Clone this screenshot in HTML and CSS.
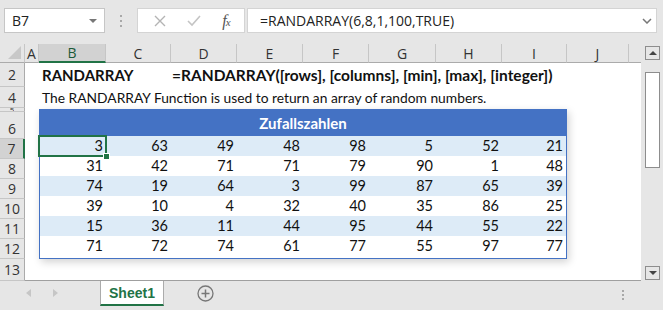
FILE: index.html
```html
<!DOCTYPE html>
<html lang="en">
<head>
    <meta charset="UTF-8">
    <title>RANDARRAY</title>
    <link rel="stylesheet" href="styles.css">
</head>
<body>
    <div class="window">
        <!-- formula bar -->
        <div class="formula-bar">
            <div class="name-box">
                <span>B7</span>
                <span class="caret"></span>
            </div>
            <div class="grip"><i></i><i></i><i></i></div>
            <div class="fx-buttons">
                <svg width="12" height="12" viewBox="0 0 12 12"><path d="M1 1 L11 11 M11 1 L1 11" stroke="#b4b4b4" stroke-width="1.4" fill="none"/></svg>
                <svg width="14" height="12" viewBox="0 0 14 12"><path d="M1 6 L5 10 L13 1" stroke="#c4c4c4" stroke-width="1.6" fill="none"/></svg>
                <span class="fx">f<small>x</small></span>
            </div>
            <div class="formula-input">
                <span>=RANDARRAY(6,8,1,100,TRUE)</span>
                <svg width="10" height="6" viewBox="0 0 10 6"><path d="M1 1 L5 5 L9 1" stroke="#777" stroke-width="1.5" fill="none"/></svg>
            </div>
        </div>

        <div class="workspace">
            <div class="sheet">
                <!-- column headers -->
                <div class="corner"></div>
                <div class="col-head">A</div>
                <div class="col-head selected">B</div>
                <div class="col-head">C</div>
                <div class="col-head">D</div>
                <div class="col-head">E</div>
                <div class="col-head">F</div>
                <div class="col-head">G</div>
                <div class="col-head">H</div>
                <div class="col-head">I</div>
                <div class="col-head">J</div>
                <div class="col-head blank"></div>

                <!-- row headers -->
                <div class="row-head r2">2</div>
                <div class="row-head r4">4</div>
                <div class="row-head r5"><span>5</span></div>
                <div class="row-head r6">6</div>
                <div class="row-head r7 selected">7</div>
                <div class="row-head r8">8</div>
                <div class="row-head r9">9</div>
                <div class="row-head r10">10</div>
                <div class="row-head r11">11</div>
                <div class="row-head r12">12</div>
                <div class="row-head r13">13</div>

                <!-- cells -->
                <div class="title">RANDARRAY</div>
                <div class="syntax">=RANDARRAY([rows], [columns], [min], [max], [integer])</div>
                <div class="intro">The RANDARRAY Function is used to return an array of random numbers.</div>

                <div class="table">
                    <div class="table-head">Zufallszahlen</div>
                    <div class="cell band active">3</div><div class="cell band">63</div><div class="cell band">49</div><div class="cell band">48</div><div class="cell band">98</div><div class="cell band">5</div><div class="cell band">52</div><div class="cell band">21</div>
                    <div class="cell">31</div><div class="cell">42</div><div class="cell">71</div><div class="cell">71</div><div class="cell">79</div><div class="cell">90</div><div class="cell">1</div><div class="cell">48</div>
                    <div class="cell band">74</div><div class="cell band">19</div><div class="cell band">64</div><div class="cell band">3</div><div class="cell band">99</div><div class="cell band">87</div><div class="cell band">65</div><div class="cell band">39</div>
                    <div class="cell">39</div><div class="cell">10</div><div class="cell">4</div><div class="cell">32</div><div class="cell">40</div><div class="cell">35</div><div class="cell">86</div><div class="cell">25</div>
                    <div class="cell band">15</div><div class="cell band">36</div><div class="cell band">11</div><div class="cell band">44</div><div class="cell band">95</div><div class="cell band">44</div><div class="cell band">55</div><div class="cell band">22</div>
                    <div class="cell">71</div><div class="cell">72</div><div class="cell">74</div><div class="cell">61</div><div class="cell">77</div><div class="cell">55</div><div class="cell">97</div><div class="cell">77</div>
                </div>
            </div>

            <div class="vscroll">
                <div class="scroll-btn up"></div>
                <div class="thumb"></div>
                <div class="scroll-btn down"></div>
            </div>
        </div>

        <!-- sheet tabs -->
        <div class="tabbar">
            <div class="nav">
                <span class="arrow left"></span>
                <span class="arrow right"></span>
            </div>
            <div class="tab">Sheet1</div>
            <div class="add-sheet">
                <svg width="17" height="17" viewBox="0 0 17 17"><circle cx="8.5" cy="8.5" r="7.5" stroke="#777" stroke-width="1.3" fill="none"/><path d="M8.5 4.5 V12.5 M4.5 8.5 H12.5" stroke="#777" stroke-width="1.5"/></svg>
            </div>
            <div class="tab-grip"><i></i><i></i><i></i></div>
        </div>
    </div>
</body>
</html>
```

FILE: styles.css
```css
body {
    margin: 0;
    background: #e6e6e6;
    font-family: "Open Sans", sans-serif;
}
.window {
    width: 663px;
    height: 310px;
    display: flex;
    flex-direction: column;
    overflow: hidden;
}

/* formula bar */
.formula-bar {
    height: 44px;
    box-sizing: border-box;
    padding-top: 8px;
    display: flex;
    align-items: flex-start;
}
.name-box {
    width: 101px;
    height: 25px;
    box-sizing: border-box;
    margin-left: 4px;
    background: white;
    border: 1px solid #c6c6c6;
    display: flex;
    align-items: center;
    justify-content: space-between;
    padding: 0 7px 0 7px;
    font-size: 14px;
    color: #222;
}
.caret {
    width: 0;
    height: 0;
    border-left: 4px solid transparent;
    border-right: 4px solid transparent;
    border-top: 4px solid #777;
}
.grip {
    width: 32px;
    height: 25px;
    display: flex;
    flex-direction: column;
    align-items: center;
    justify-content: center;
    gap: 3px;
}
.grip i,
.tab-grip i {
    display: block;
    width: 2px;
    height: 2px;
    background: #a8a8a8;
}
.fx-buttons {
    width: 108px;
    height: 25px;
    box-sizing: border-box;
    background: white;
    border: 1px solid #d4d4d4;
    display: flex;
    align-items: center;
    justify-content: space-around;
    padding: 0 4px 0 6px;
}
.fx {
    font-family: "Liberation Serif", serif;
    font-style: italic;
    font-size: 16px;
    color: #555;
    letter-spacing: -1px;
}
.fx small {
    font-size: 11px;
}
.formula-input {
    flex: 1;
    height: 25px;
    box-sizing: border-box;
    margin: 0 6px 0 2px;
    background: white;
    border: 1px solid #d4d4d4;
    display: flex;
    align-items: center;
    justify-content: space-between;
    padding: 0 4px 0 12px;
    font-size: 14px;
    color: #222;
}

/* worksheet */
.workspace {
    height: 237px;
    display: flex;
}
.sheet {
    width: 641px;
    display: grid;
    grid-template-columns: 25px 14px 67px 65px 66px 66px 66px 67px 66px 65px 62px 12px;
    grid-template-rows: 19px 24px 21px 4px 27px 20px 20px 20px 20px 20px 20px 22px;
    background: white;
    border-bottom: 1px solid #9f9f9f;
    box-sizing: border-box;
    font-family: "Lato", sans-serif;
    font-size: 14px;
    color: #111;
}
.corner {
    grid-row: 1;
    grid-column: 1;
    background: #e6e6e6;
    border-right: 1px solid #c6c6c6;
    border-bottom: 1px solid #ababab;
    position: relative;
}
.corner::after {
    content: "";
    position: absolute;
    right: 3px;
    bottom: 3px;
    border-left: 13px solid transparent;
    border-bottom: 13px solid #c8c8c8;
}
.col-head {
    grid-row: 1;
    background: #e6e6e6;
    border-right: 1px solid #c6c6c6;
    border-bottom: 1px solid #ababab;
    display: flex;
    align-items: center;
    justify-content: center;
    font-family: "Open Sans", sans-serif;
    font-size: 14px;
    color: #333;
}
.col-head.selected {
    background: #d2d2d2;
    border-bottom: 2px solid #217346;
    color: #1d5a38;
}
.col-head.blank {
    border-right: none;
}
.row-head {
    grid-column: 1;
    background: #e6e6e6;
    border-right: 1px solid #ababab;
    border-bottom: 1px solid #c6c6c6;
    display: flex;
    align-items: center;
    justify-content: center;
    font-family: "Open Sans", sans-serif;
    font-size: 14px;
    color: #333;
    overflow: hidden;
}
.row-head.selected {
    background: #d2d2d2;
    border-right: 2px solid #217346;
}
.r2 { grid-row: 2; }
.r4 { grid-row: 3; }
.r5 { grid-row: 4; align-items: flex-end; }
.r5 span { font-size: 8px; line-height: 4px; height: 3px; overflow: hidden; }
.r6 { grid-row: 5; padding-top: 6px; }
.r7 { grid-row: 6; }
.r8 { grid-row: 7; }
.r9 { grid-row: 8; }
.r10 { grid-row: 9; }
.r11 { grid-row: 10; }
.r12 { grid-row: 11; }
.r13 { grid-row: 12; align-items: flex-start; padding-top: 1px; }

.title,
.syntax,
.intro {
    white-space: nowrap;
    display: flex;
    align-items: center;
}
.title {
    grid-row: 2;
    grid-column: 3 / 5;
    padding-left: 3px;
    font-size: 15px;
    font-weight: 700;
}
.syntax {
    grid-row: 2;
    grid-column: 5 / 13;
    padding-left: 1px;
    font-size: 15.5px;
    font-weight: 700;
}
.intro {
    grid-row: 3;
    grid-column: 3 / 13;
    padding-left: 3px;
    font-size: 13.8px;
}

/* table with random numbers */
.table {
    grid-row: 4 / 12;
    grid-column: 3 / 11;
    margin-top: 1px;
    display: grid;
    grid-template-columns: 66px 65px 66px 66px 66px 67px 66px 64px;
    grid-template-rows: 26px repeat(5, 20px) 19px;
    border: 1px solid #4472c4;
    box-shadow: 2px 3px 8px rgba(0, 0, 0, .18);
    background: white;
}
.table-head {
    grid-column: 1 / -1;
    background: #4472c4;
    color: white;
    font-weight: 700;
    font-size: 15px;
    display: flex;
    align-items: center;
    justify-content: center;
}
.cell {
    text-align: right;
    padding-right: 3px;
    line-height: 20px;
    font-size: 14.5px;
}
.cell.band {
    background: #ddebf7;
}
.cell.active {
    position: relative;
}
.cell.active::before {
    content: "";
    position: absolute;
    left: -2px;
    top: -1px;
    right: -1px;
    bottom: -1px;
    border: 2px solid #217346;
}
.cell.active::after {
    content: "";
    position: absolute;
    right: -4px;
    bottom: -4px;
    width: 5px;
    height: 5px;
    background: #217346;
    border: 1px solid white;
}

/* vertical scrollbar */
.vscroll {
    width: 22px;
    box-sizing: border-box;
    padding: 2px 3px 1px 4px;
    display: flex;
    flex-direction: column;
    background: #e6e6e6;
}
.scroll-btn {
    height: 14px;
    box-sizing: border-box;
    border: 1px solid #8d8d8d;
    background: #e6e6e6;
    display: flex;
    align-items: center;
    justify-content: center;
}
.scroll-btn::after {
    content: "";
    border-left: 4px solid transparent;
    border-right: 4px solid transparent;
}
.scroll-btn.up::after {
    border-bottom: 4px solid #444;
}
.scroll-btn.down {
    margin-top: auto;
}
.scroll-btn.down::after {
    border-top: 4px solid #444;
}
.thumb {
    height: 96px;
    margin-top: 12px;
    box-sizing: border-box;
    background: white;
    border: 1px solid #8d8d8d;
}

/* sheet tabs */
.tabbar {
    height: 29px;
    display: flex;
    align-items: flex-start;
}
.nav {
    width: 100px;
    height: 24px;
    display: flex;
    align-items: center;
    gap: 22px;
    padding-left: 26px;
    box-sizing: border-box;
}
.arrow {
    width: 0;
    height: 0;
    border-top: 4px solid transparent;
    border-bottom: 4px solid transparent;
}
.arrow.left {
    border-right: 5px solid #c6c6c6;
}
.arrow.right {
    border-left: 5px solid #c6c6c6;
}
.tab {
    width: 64px;
    height: 25px;
    box-sizing: border-box;
    background: white;
    border-left: 1px solid #ababab;
    border-right: 1px solid #ababab;
    border-bottom: 2px solid #217346;
    display: flex;
    align-items: center;
    justify-content: center;
    font-family: "Liberation Sans", sans-serif;
    font-size: 14px;
    font-weight: 700;
    color: #217346;
}
.add-sheet {
    width: 18px;
    height: 25px;
    margin-left: 33px;
    display: flex;
    align-items: center;
}
.tab-grip {
    margin-left: auto;
    margin-right: 39px;
    height: 25px;
    padding-top: 3px;
    box-sizing: border-box;
    display: flex;
    flex-direction: column;
    justify-content: center;
    gap: 2px;
}
```
